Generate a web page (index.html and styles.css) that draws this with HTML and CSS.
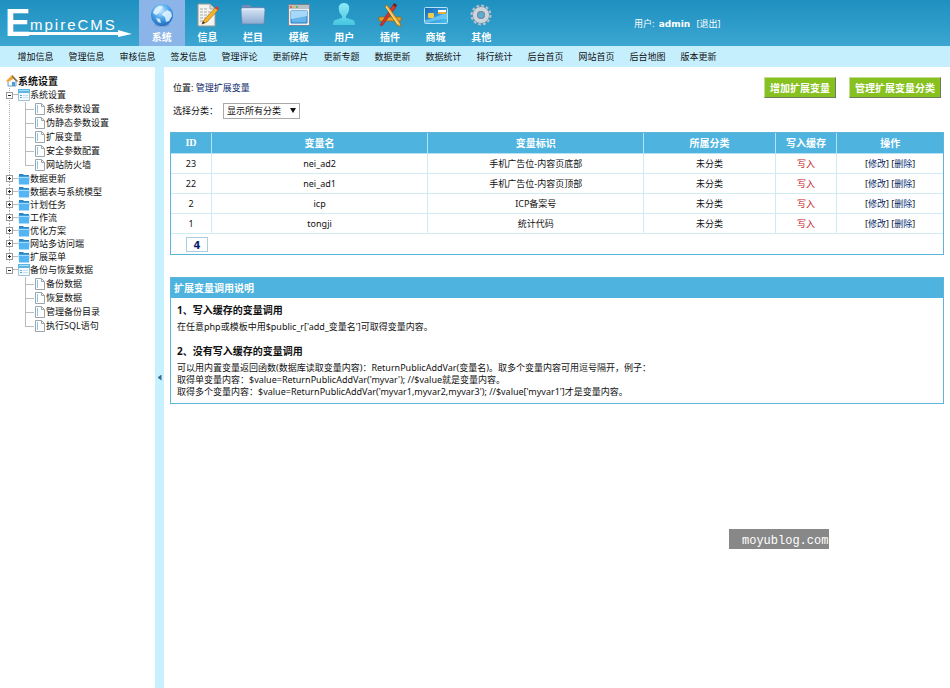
FILE: index.html
```html
<!DOCTYPE html>
<html lang="zh-CN">
<head>
    <meta charset="UTF-8">
    <meta name="viewport" content="width=device-width, initial-scale=1.0">
    <title>EmpireCMS</title>
    <link rel="stylesheet" href="styles.css">
</head>
<body>
    <svg class="defs" aria-hidden="true">
        <defs>
            <linearGradient id="gFolder" x1="0" y1="0" x2="0" y2="1"><stop offset="0" stop-color="#d9e6f6"/><stop offset="1" stop-color="#8eaad2"/></linearGradient>
            <radialGradient id="gGlobe" cx=".45" cy=".3" r=".75"><stop offset="0" stop-color="#c8eaff"/><stop offset=".5" stop-color="#4ba3ea"/><stop offset="1" stop-color="#1a62b8"/></radialGradient>
            <linearGradient id="gUser" x1="0" y1="0" x2="0" y2="1"><stop offset="0" stop-color="#8deaf5"/><stop offset="1" stop-color="#46c6e0"/></linearGradient>
            <linearGradient id="gCard" x1="0" y1="0" x2="1" y2="1"><stop offset="0" stop-color="#1464b4"/><stop offset="1" stop-color="#4cc4f4"/></linearGradient>
            <symbol id="folder" viewBox="0 0 12 12"><path d="M1 1h4l1 1h5v9H1z" fill="#2b86c8"/><path d="M.5 3.500h11l-.5 8H1z" fill="#55b5f2"/><path d="M1 4.500h10" stroke="#a4dcff"/></symbol>
            <symbol id="window" viewBox="0 0 12 12"><path d="M.5.5h11v11H.5z" fill="#f3faff" stroke="#a3c2d6"/><path d="M0 0h12v4H0z" fill="#5fb5e4"/><path d="M1 1.500h10" stroke="#a8dbf4"/><path d="M2 6.500h2M2 8.500h2" stroke="#58a5d4"/><path d="M5 6.500h5M5 8.500h5" stroke="#c8dfec"/></symbol>
            <symbol id="page" viewBox="0 0 10 12"><path d="M.5.5h6l3 3v8h-9z" fill="#fff" stroke="#9aa5ac"/><path d="M6.500.5v3h3" fill="none" stroke="#9aa5ac"/><path d="M2.500 2v8" stroke="#86c6e8"/></symbol>
        </defs>
    </svg>

    <header class="header">
        <a class="logo" href="#" aria-label="EmpireCMS">
            <span class="logo-e">E</span><span class="logo-text">mpireCMS</span>
            <svg class="logo-arrow" viewBox="0 0 124 8" aria-hidden="true"><path d="M0 2h110V0l14 4-14 3V5H0z" fill="#fff"/></svg>
        </a>
        <nav class="main-menu">
            <a class="active" href="#">
                <svg viewBox="0 0 24 24"><ellipse cx="12" cy="22" rx="8" ry="2" fill="#6d92c8" opacity=".6"/><circle cx="12" cy="12" r="11" fill="url(#gGlobe)"/><path d="M4 7c2-3 5-5 8-4l1 2-3 2-1 3-3 2-3-2zM13 10l4-3 4 2 1 4-3 5-3 1-1-5-3-2zM6 15l4 1 1 4-3-1z" fill="#e5f7ff" opacity=".85"/></svg>
                <span>系统</span>
            </a>
            <a href="#">
                <svg viewBox="0 0 24 24"><path d="M3 1h12l5 5v17H3z" fill="#f4f4f0" stroke="#999a91"/><path d="M15 1v5h5" fill="#dcdcd5" stroke="#aaa"/><path d="M5 6h8M5 9h11M5 12h9M5 15h7M5 18h6" stroke="#aaa" stroke-dasharray="3 1"/><path d="M7 21l2-4L20 5l3 2-11 12z" fill="#f3b62a" stroke="#b86b18" stroke-width=".7"/><path d="M20 5l1-2 3 2-1 2z" fill="#d93d32"/><path d="M7 21l1-3 2 2z" fill="#333"/></svg>
                <span>信息</span>
            </a>
            <a href="#">
                <svg viewBox="0 0 24 24"><path d="M1 3l1-1h7l2 2h11v5H1z" fill="#718db7"/><path d="M0 6l1-1h22l1 1-1 15H1z" fill="url(#gFolder)" stroke="#6681ab" stroke-width=".7"/><path d="M1 6h22" stroke="#eef5fd"/></svg>
                <span>栏目</span>
            </a>
            <a href="#">
                <svg viewBox="0 0 24 24"><path d="M1.500 1.500h21v21h-21z" fill="#ecf0f3" stroke="#788692"/><path d="M2 2h20v4H2z" fill="#bac1c7"/><circle cx="4" cy="4" r="1" fill="#d94a3b"/><circle cx="7" cy="4" r="1" fill="#e3b13a"/><circle cx="10" cy="4" r="1" fill="#54ab49"/><path d="M4 8h16v12H4z" fill="#65b5ed" stroke="#287bbf"/><path d="M4 8h16v5L4 16z" fill="#a6d8fa"/></svg>
                <span>模板</span>
            </a>
            <a href="#">
                <svg viewBox="0 0 24 24"><path d="M12 0c4 0 6 3 5 7-.5 3-2 4-3 6v2l7 2c2 1 2 3 2 5H1c0-2 0-4 2-5l7-2v-2c-1-2-3-3-3-6-1-4 1-7 5-7z" fill="url(#gUser)"/></svg>
                <span>用户</span>
            </a>
            <a href="#">
                <svg viewBox="0 0 24 24"><path d="M1 14h22v4H1z" fill="#e2a12b" stroke="#9a6413" stroke-width=".7"/><path d="M2 22L15 2l3 2L4 23z" fill="#d8352c" stroke="#8d211c" stroke-width=".6"/><path d="M7 3l2-1 13 18 1 4-4-2z" fill="#f5bd3e" stroke="#9a6413" stroke-width=".7"/><path d="M8 4l12 17" stroke="#ffe398"/><path d="M15 2l1-2 3 2-1 2z" fill="#721b16"/></svg>
                <span>插件</span>
            </a>
            <a href="#">
                <svg viewBox="0 0 24 24"><rect x=".5" y="4.500" width="23" height="16" rx="1" fill="url(#gCard)" stroke="#b5e2f7"/><path d="M1 17c8-1 13-5 22-7v6c-8 0-14 2-19 4H1z" fill="#83dbff" opacity=".6"/><rect x="4" y="10" width="6" height="5" rx="1" fill="#f0ca4d"/><path d="M14 7h8v3h-8z" fill="#fff"/><path d="M14 9h8v2h-8z" fill="#e4ae3a"/></svg>
                <span>商城</span>
            </a>
            <a href="#">
                <svg viewBox="0 0 24 24"><circle cx="12" cy="12" r="9" fill="none" stroke="#b4bfca" stroke-width="3" stroke-dasharray="2.700 2"/><circle cx="12" cy="12" r="6" fill="none" stroke="#8392a1" stroke-width="5"/><circle cx="12" cy="12" r="6" fill="none" stroke="#ccd4dc" stroke-width="4"/><circle cx="12" cy="12" r="3.500" fill="#5aaed2" stroke="#7b8794"/></svg>
                <span>其他</span>
            </a>
        </nav>
        <div class="user">用户: <b>admin</b> <a href="#">[退出]</a></div>
    </header>

    <nav class="sub-menu">
        <a href="#">增加信息</a>
        <a href="#">管理信息</a>
        <a href="#">审核信息</a>
        <a href="#">签发信息</a>
        <a href="#">管理评论</a>
        <a href="#">更新碎片</a>
        <a href="#">更新专题</a>
        <a href="#">数据更新</a>
        <a href="#">数据统计</a>
        <a href="#">排行统计</a>
        <a href="#">后台首页</a>
        <a href="#">网站首页</a>
        <a href="#">后台地图</a>
        <a href="#">版本更新</a>
    </nav>

    <div class="page">
        <aside class="sidebar">
            <div class="tree-root">
                <svg viewBox="0 0 12 12"><path d="M2 6v5h8V6L6 2z" fill="#f4f8fb" stroke="#6e9fc7"/><path d="M6 7h3v4H6z" fill="#4b9cd8"/><path d="M0 6l6-6 3 3-7 4z" fill="#f0a63b"/><path d="M6 0l6 6-1 1-5-5z" fill="#8b6840"/></svg>
                <b>系统设置</b>
            </div>
            <ul class="tree">
                <li>
                    <div class="node expanded"><button class="toggle" aria-label="收起"></button><svg><use href="#window"/></svg><a href="#">系统设置</a></div>
                    <ul>
                        <li><svg><use href="#page"/></svg><a href="#">系统参数设置</a></li>
                        <li><svg><use href="#page"/></svg><a href="#">伪静态参数设置</a></li>
                        <li><svg><use href="#page"/></svg><a href="#">扩展变量</a></li>
                        <li><svg><use href="#page"/></svg><a href="#">安全参数配置</a></li>
                        <li><svg><use href="#page"/></svg><a href="#">网站防火墙</a></li>
                    </ul>
                </li>
                <li><div class="node"><button class="toggle" aria-label="展开"></button><svg><use href="#folder"/></svg><a href="#">数据更新</a></div></li>
                <li><div class="node"><button class="toggle" aria-label="展开"></button><svg><use href="#folder"/></svg><a href="#">数据表与系统模型</a></div></li>
                <li><div class="node"><button class="toggle" aria-label="展开"></button><svg><use href="#folder"/></svg><a href="#">计划任务</a></div></li>
                <li><div class="node"><button class="toggle" aria-label="展开"></button><svg><use href="#folder"/></svg><a href="#">工作流</a></div></li>
                <li><div class="node"><button class="toggle" aria-label="展开"></button><svg><use href="#folder"/></svg><a href="#">优化方案</a></div></li>
                <li><div class="node"><button class="toggle" aria-label="展开"></button><svg><use href="#folder"/></svg><a href="#">网站多访问端</a></div></li>
                <li><div class="node"><button class="toggle" aria-label="展开"></button><svg><use href="#folder"/></svg><a href="#">扩展菜单</a></div></li>
                <li>
                    <div class="node expanded"><button class="toggle" aria-label="收起"></button><svg><use href="#window"/></svg><a href="#">备份与恢复数据</a></div>
                    <ul>
                        <li><svg><use href="#page"/></svg><a href="#">备份数据</a></li>
                        <li><svg><use href="#page"/></svg><a href="#">恢复数据</a></li>
                        <li><svg><use href="#page"/></svg><a href="#">管理备份目录</a></li>
                        <li><svg><use href="#page"/></svg><a href="#">执行SQL语句</a></li>
                    </ul>
                </li>
            </ul>
        </aside>

        <div class="splitter"><button aria-label="隐藏菜单"></button></div>

        <main class="main">
            <div class="top-bar">
                <div>位置: <a class="link" href="#">管理扩展变量</a></div>
                <div class="actions">
                    <button>增加扩展变量</button>
                    <button>管理扩展变量分类</button>
                </div>
            </div>
            <form class="filter">
                <label for="classid">选择分类：</label>
                <span class="select-box">
                    <select id="classid" name="classid">
                        <option>显示所有分类</option>
                    </select>
                </span>
            </form>

            <table class="list">
                <colgroup>
                    <col class="c-id"><col class="c-name"><col class="c-name"><col class="c-class"><col class="c-cache"><col>
                </colgroup>
                <thead>
                    <tr><th class="serif">ID</th><th>变量名</th><th>变量标识</th><th>所属分类</th><th>写入缓存</th><th>操作</th></tr>
                </thead>
                <tbody>
                    <tr><td>23</td><td>nei_ad2</td><td>手机广告位-内容页底部</td><td>未分类</td><td class="red">写入</td><td>[<a class="link" href="#">修改</a>] [<a class="link" href="#">删除</a>]</td></tr>
                    <tr><td>22</td><td>nei_ad1</td><td>手机广告位-内容页顶部</td><td>未分类</td><td class="red">写入</td><td>[<a class="link" href="#">修改</a>] [<a class="link" href="#">删除</a>]</td></tr>
                    <tr><td>2</td><td>icp</td><td>ICP备案号</td><td>未分类</td><td class="red">写入</td><td>[<a class="link" href="#">修改</a>] [<a class="link" href="#">删除</a>]</td></tr>
                    <tr><td>1</td><td>tongji</td><td>统计代码</td><td>未分类</td><td class="red">写入</td><td>[<a class="link" href="#">修改</a>] [<a class="link" href="#">删除</a>]</td></tr>
                </tbody>
                <tfoot>
                    <tr><td colspan="6"><a class="total" href="#">4</a></td></tr>
                </tfoot>
            </table>

            <section class="help">
                <h2>扩展变量调用说明</h2>
                <div class="help-body">
                    <h3>1、写入缓存的变量调用</h3>
                    <p>在任意php或模板中用$public_r['add_变量名']可取得变量内容。</p>
                    <h3>2、没有写入缓存的变量调用</h3>
                    <p>可以用内置变量返回函数(数据库读取变量内容)：ReturnPublicAddVar(变量名)。取多个变量内容可用逗号隔开，例子：<br>
                    取得单变量内容：$value=ReturnPublicAddVar('myvar'); //$value就是变量内容。<br>
                    取得多个变量内容：$value=ReturnPublicAddVar('myvar1,myvar2,myvar3'); //$value['myvar1']才是变量内容。</p>
                </div>
            </section>
        </main>
    </div>

    <div class="watermark">moyublog.com</div>
</body>
</html>
```
FILE: styles.css
```css
* {
    box-sizing: border-box;
}
body {
    margin: 0;
    min-height: 100vh;
    display: flex;
    flex-direction: column;
    font: 9px/12px "Noto Sans", "Noto Sans CJK SC", sans-serif;
    color: #111;
    background: #fff;
}
a {
    color: inherit;
    text-decoration: none;
}
ul {
    list-style: none;
    margin: 0;
    padding: 0;
}
button {
    font: inherit;
    padding: 0;
    cursor: pointer;
}
.defs {
    position: absolute;
    width: 0;
    height: 0;
}

/* 顶部 */
.header {
    display: flex;
    height: 46px;
    color: #fff;
    background: linear-gradient(#1e90c0, #3ba6d1);
}
.logo {
    position: relative;
    width: 139px;
    padding-left: 5px;
    font-family: "Liberation Sans", sans-serif;
    white-space: nowrap;
}
.logo-e {
    font-size: 38px;
    line-height: 46px;
    font-weight: bold;
}
.logo-text {
    font-size: 15px;
    letter-spacing: 2px;
    position: absolute;
    left: 30px;
    top: 19px;
}
.logo-arrow {
    position: absolute;
    left: 8px;
    top: 30px;
    width: 124px;
    height: 8px;
}
.main-menu {
    display: flex;
    width: 365px;
}
.main-menu a {
    flex: 1;
    padding-top: 3px;
    display: flex;
    flex-direction: column;
    align-items: center;
    gap: 4px;
    font-size: 10px;
    font-weight: bold;
}
.main-menu a.active {
    background: #8bb5e8;
}
.main-menu svg {
    width: 24px;
    height: 24px;
}
.user {
    margin: 18px 0 0 130px;
}
.user b {
    font-family: "DejaVu Sans", sans-serif;
    margin: 0 4px 0 2px;
}
.sub-menu {
    display: flex;
    height: 21px;
    padding-left: 10px;
    line-height: 22px;
    background: #c6effe;
}
.sub-menu a {
    width: 51px;
    text-align: center;
    white-space: nowrap;
}

.page {
    flex: 1;
    display: flex;
}

/* 左侧菜单 */
.sidebar {
    width: 155px;
    padding-top: 7px;
}
.sidebar svg {
    width: 12px;
    height: 12px;
    flex: none;
}
.tree-root {
    display: flex;
    align-items: center;
    height: 14px;
    padding-left: 6px;
    font-size: 10px;
}
.tree > li:not(:last-child) {
    background: repeating-linear-gradient(#aaa 0 1px, #fff 1px 2px) 9px 0 / 1px 100% no-repeat;
}
.node {
    display: flex;
    align-items: center;
    height: 13px;
    padding-left: 6px;
    background: linear-gradient(#bbb, #bbb) 13px 6px / 5px 1px no-repeat;
}
.node.expanded {
    height: 14px;
}
.toggle {
    width: 7px;
    height: 7px;
    margin-right: 5px;
    border: 1px solid #999;
    background: linear-gradient(#222, #222) 1px 2px / 3px 1px no-repeat, linear-gradient(#222, #222) 2px 1px / 1px 3px no-repeat #fff;
}
.expanded .toggle {
    background: linear-gradient(#222, #222) 1px 2px / 3px 1px no-repeat #fff;
}
.tree ul {
    margin-left: 25px;
}
.tree ul li {
    display: flex;
    align-items: center;
    height: 14px;
    padding-left: 9px;
    background: linear-gradient(#bbb, #bbb) 0 0 / 1px 100% no-repeat, linear-gradient(#bbb, #bbb) 0 7px / 9px 1px no-repeat;
}
.tree ul li:last-child {
    background-size: 1px 50%, 9px 1px;
}

.splitter {
    width: 9px;
    display: flex;
    align-items: center;
    justify-content: center;
    background: #c8f1ff;
}
.splitter button {
    width: 4px;
    height: 6px;
    border: 0;
    background: #336d8c;
    clip-path: polygon(0 50%, 100% 0, 100% 100%);
}

/* 右侧内容 */
.main {
    flex: 1;
    padding: 10px 6px;
}
.top-bar {
    display: flex;
    justify-content: space-between;
    align-items: center;
    padding: 0 3px;
}
.link {
    color: #0c2a6b;
}
.actions {
    display: flex;
    gap: 13px;
}
.actions button {
    height: 21px;
    padding: 0 5px;
    font-size: 10px;
    font-weight: bold;
    color: #fff;
    background: #86c11f;
    border: 1px solid;
    border-color: #c4dd96 #6f7b60 #6f7b60 #c4dd96;
}
.filter {
    display: flex;
    align-items: center;
    gap: 5px;
    padding: 5px 3px 13px;
}
.select-box {
    position: relative;
}
.select-box::after {
    content: "";
    position: absolute;
    right: 4px;
    top: 5px;
    border: 3px solid transparent;
    border-top: 5px solid #111;
    pointer-events: none;
}
.filter select {
    display: block;
    width: 77px;
    height: 16px;
    padding: 0 3px;
    font: inherit;
    color: #111;
    appearance: none;
    background: #fff;
    border: 1px solid #aaa;
}

.list {
    width: 100%;
    table-layout: fixed;
    border-collapse: separate;
    border-spacing: 0;
    border: 1px solid #5cb6da;
    text-align: center;
}
.c-id { width: 41px; }
.c-name { width: 28%; }
.c-class { width: 17%; }
.c-cache { width: 8%; }
.list th,
.list td {
    height: 20px;
    padding: 0;
    border-right: 1px solid #cfecf3;
    border-bottom: 1px solid #cfecf3;
}
.list th {
    height: 21px;
    font-size: 10px;
    color: #fff;
    background: #4eb3de;
    border-color: #b5e2f2;
}
.list .serif {
    font-family: "Liberation Serif", serif;
}
.list th:last-child,
.list td:last-child {
    border-right: 0;
}
.list .red {
    color: #c8141c;
}
.list tfoot td {
    border: 0;
    text-align: left;
}
.total {
    display: block;
    width: 22px;
    height: 15px;
    margin-left: 15px;
    border: 1px solid #a9cfe0;
    font: bold 10px/15px "DejaVu Sans", sans-serif;
    text-align: center;
    color: #0a1e6e;
}

.help {
    margin-top: 22px;
    border: 1px solid #5cb6da;
}
.help h2 {
    margin: 0;
    padding-left: 3px;
    font-size: 10px;
    line-height: 20px;
    color: #fff;
    background: #4eb3de;
}
.help-body {
    padding: 6px 6px 5px;
}
.help h3 {
    margin: 0 0 5px;
    font-size: 10px;
    line-height: 12px;
}
.help p {
    margin: 0 0 12px;
}
.help p:last-child {
    margin: 0;
}

.watermark {
    position: fixed;
    right: 121px;
    bottom: 139px;
    width: 100px;
    height: 20px;
    padding-left: 13px;
    font: 12px/24px "Liberation Mono", monospace;
    color: #fff;
    background: #888;
}
```
